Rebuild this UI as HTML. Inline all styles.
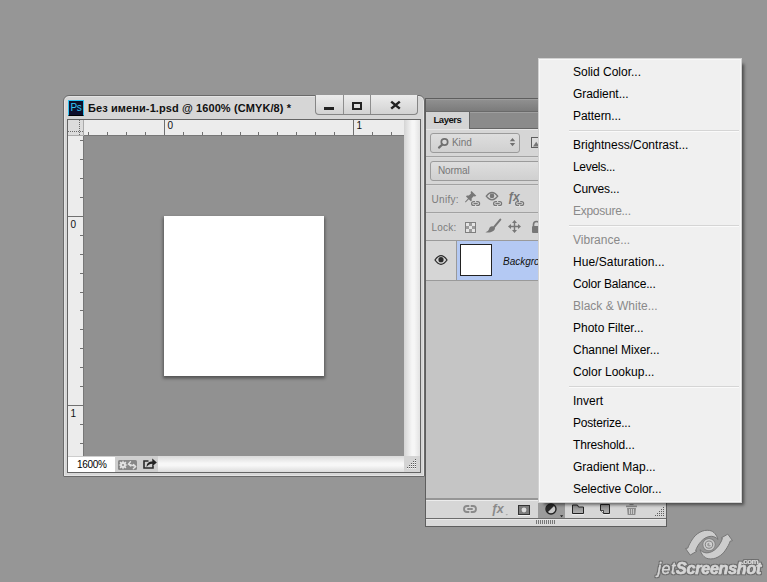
<!DOCTYPE html>
<html lang="ru">
<head>
<meta charset="utf-8">
<title>Photoshop - Layers adjustment menu</title>
<style>
*{box-sizing:border-box;margin:0;padding:0}
html,body{width:767px;height:582px;overflow:hidden}
body{background:#969696;font-family:"Liberation Sans",sans-serif;position:relative;color:#000}
.abs{position:absolute}
/* ---------- document window ---------- */
#win{position:absolute;left:63px;top:95px;width:362px;height:382px;background:#d6d6d6;border:1px solid #6a6a6a;border-radius:6px 6px 1px 1px;box-shadow:inset 0 0 0 1px #e4e4e4}
#title{position:absolute;left:24px;top:4px;font-size:11px;line-height:16px;white-space:nowrap;color:#111;font-weight:bold;letter-spacing:0.1px}
#psico{position:absolute;left:4px;top:4px;width:16px;height:16px;background:#0d0f2b;border:1px solid #2fc3f2;border-bottom:1px solid #000;color:#35c6f4;font-size:10px;line-height:14px;text-align:center;font-weight:normal;letter-spacing:-0.4px}
#btns{position:absolute;left:251px;top:-1px;width:103px;height:20px;border:1px solid #858585;border-top:none;border-radius:0 0 4px 4px;background:linear-gradient(#ececec,#d2d2d2)}
#btns i{position:absolute;top:0;width:1px;height:19px;background:#8e8e8e}
#inner{position:absolute;left:3px;top:23px;width:354px;height:354px;border:1px solid #646464;background:#919191;overflow:hidden}
#hr{position:absolute;left:16px;top:0;width:320px;height:16px;background:#ececec;border-bottom:1px solid #777}
#vr{position:absolute;left:0;top:16px;width:16px;height:320px;background:#ececec;border-right:1px solid #777}
#corner{position:absolute;left:0;top:0;width:16px;height:16px;background:#dcdcdc;border-right:1px solid #aaa;border-bottom:1px solid #aaa}
.rl{position:absolute;font-size:10px;line-height:9px;color:#111}
#doc{position:absolute;left:96px;top:96px;width:160px;height:160px;background:#fff;box-shadow:0 1.500px 3px 1px rgba(0,0,0,.42)}
#vsb{position:absolute;left:336px;top:0;width:16px;height:336px;background:linear-gradient(90deg,#d4d4d4,#f6f6f6 50%,#f6f6f6 65%,#e2e2e2)}
#status{position:absolute;left:0;top:336px;width:352px;height:16px;background:#cfcfcf}
#zoom{position:absolute;left:0;top:0;width:47px;height:16px;background:#fff;font-size:10px;line-height:15px;padding-left:9px;color:#000;letter-spacing:-0.3px;border-top:1px solid #cdcdcd}
#hsb{position:absolute;left:90px;top:0;width:246px;height:16px;background:linear-gradient(#dadada,#f7f7f7 45%,#f7f7f7 60%,#dcdcdc)}
#grip{position:absolute;left:336px;top:0;width:16px;height:16px;background:#d4d4d4}
/* ---------- layers panel ---------- */
#panel{position:absolute;left:425px;top:98px;width:242px;height:429px;border:1px solid #5e5e5e;background:#d6d6d6;overflow:hidden}
#pempty{position:absolute;left:0;top:182px;width:240px;height:217px;background:#c5c5c5}
#phead{position:absolute;left:0;top:0;width:240px;height:12px;background:linear-gradient(#919191,#7b7b7b);box-shadow:inset 0 1px 0 #9c9c9c}
#ptabs{position:absolute;left:0;top:13px;width:240px;height:17px;background:#8b8b8b;border-bottom:1px solid #666;box-shadow:inset 0 1px 0 #9f9f9f,0 1px 0 #e6e6e6}
#ptab{position:absolute;left:0;top:0;width:44px;height:17px;background:#d4d4d4;border-right:1px solid #666;font-size:9.5px;font-weight:bold;line-height:16px;padding-left:7.5px;color:#111;letter-spacing:-0.45px}
.sepd{position:absolute;left:0;width:240px;height:1px;background:#a2a2a2}
.sepl{position:absolute;left:0;width:240px;height:1px;background:#dadada}
.dd{position:absolute;height:20px;border:1px solid #9b9b9b;border-radius:3px;background:linear-gradient(#dedede,#d0d0d0);font-size:10px;line-height:18px;color:#777;letter-spacing:-0.3px}
.lbl{position:absolute;font-size:10px;line-height:12px;color:#7c7c7c}
#lrow{position:absolute;left:0;top:141px;width:240px;height:41px;border-top:1px solid #9a9a9a;border-bottom:1px solid #9a9a9a;background:#b4c9f3}
#leye{position:absolute;left:0;top:0;width:31px;height:39px;background:#d6d6d6;border-right:1px solid #9a9a9a}
#thumb{position:absolute;left:34px;top:3px;width:32px;height:32px;background:#fff;border:1px solid #222}
#lname{position:absolute;left:77px;top:14px;font-size:10px;font-style:italic;line-height:14px;color:#111;white-space:nowrap}
#pfoot{position:absolute;left:0;top:399px;width:240px;height:21px;background:#d6d6d6;border-top:2px solid #969696;border-bottom:1px solid #6c6c6c;box-shadow:inset 0 1px 0 #ececec}
#pgrip{position:absolute;left:0;top:420px;width:240px;height:7px;background:#d9d9d9;box-shadow:inset 0 1px 0 #e8e8e8}
/* ---------- menu ---------- */
#menu{position:absolute;left:538px;top:58px;width:204px;height:445px;background:#f0f0f0;border:1px solid #d2d2d2;box-shadow:4px 4px 3px -2px rgba(0,0,0,.5),inset 0 0 0 1px #f8f8f8;padding:2px}
#menu div.mi{height:22px;line-height:23px;font-size:12px;padding-left:32px;white-space:nowrap;color:#000}
#menu div.dis{color:#8a8a8a}
#menu div.ms{height:7px;position:relative}
#menu div.ms:after{content:"";position:absolute;left:28px;right:0px;top:3px;height:1px;background:#d5d5d5;border-bottom:1px solid #fafafa;box-sizing:content-box}
/* ---------- watermark ---------- */
#wm{position:absolute;left:650px;top:526px;width:117px;height:56px}
</style>
</head>
<body>

<div id="win">
  <div id="psico">Ps</div>
  <div id="title">Без имени-1.psd @ 1600% (CMYK/8) *</div>
  <div id="btns"><i style="left:27px"></i><i style="left:54px"></i>
    <svg class="abs" style="left:0;top:0" width="103" height="20" viewBox="0 0 103 20">
      <rect x="8" y="12" width="10" height="3" fill="#222"/>
      <rect x="37" y="8" width="8" height="6" fill="none" stroke="#222" stroke-width="2"/>
      <path d="M75.200 6.600L83.800 13.600M83.800 6.600L75.200 13.600" stroke="#222" stroke-width="2.500" fill="none"/>
    </svg>
  </div>
  <div id="inner">
    <div id="doc"></div>
    <div id="hr"></div>
    <div id="vr"></div>
    <div id="corner"></div>
    <svg class="abs" style="left:0;top:0" width="336" height="336" viewBox="0 0 336 336" id="ticks"><path d="M20.5 12V15M39.5 12V15M58.5 12V15M77.5 12V15M96.5 0V15M115.5 12V15M134.5 12V15M153.5 12V15M172.5 12V15M190.5 12V15M209.5 12V15M228.5 12V15M247.5 12V15M266.5 12V15M285.5 0V15M304.5 12V15M323.5 12V15M12 20.5H15M12 39.5H15M12 58.5H15M12 77.5H15M0 96.5H15M12 115.5H15M12 134.5H15M12 153.5H15M12 172.5H15M12 190.5H15M12 209.5H15M12 228.5H15M12 247.5H15M12 266.5H15M0 285.5H15M12 304.5H15M12 323.5H15" stroke="#707070" stroke-width="1" fill="none" shape-rendering="crispEdges"/></svg>
    <span class="rl" style="left:99.5px;top:1px">0</span>
    <span class="rl" style="left:288.5px;top:1px">1</span>
    <span class="rl" style="left:2.5px;top:100px">0</span>
    <span class="rl" style="left:2.5px;top:289px">1</span>
    <div id="vsb"></div>
    <div id="status">
      <div id="zoom">1600%</div>
      <div id="hsb"></div>
      <div id="grip"></div>
    </div>
  </div>
</div>

<div id="panel">
  <div id="phead"></div>
  <div class="sepd" style="top:12px;background:#6a6a6a"></div>
  <div id="ptabs"><div id="ptab">Layers</div></div>
  <div class="dd" style="left:4px;top:34px;width:90px;padding-left:21px;letter-spacing:-0.1px">Kind</div>
  <div class="sepd" style="top:57px"></div><div class="sepl" style="top:58px"></div>
  <div class="dd" style="left:4px;top:62px;width:230px;padding-left:7px;letter-spacing:-0.1px">Normal</div>
  <div class="sepd" style="top:85px"></div><div class="sepl" style="top:86px"></div>
  <div class="lbl" style="left:5.5px;top:95px;letter-spacing:0.3px">Unify:</div>
  <div class="sepd" style="top:113px"></div><div class="sepl" style="top:114px"></div>
  <div class="lbl" style="left:5.5px;top:123px;letter-spacing:0.2px">Lock:</div>
  <div id="lrow"><div id="leye"></div><div id="thumb"></div><div id="lname">Background</div></div>
  <div id="pempty"></div>
  <div id="pfoot"></div>
  <div id="pgrip"></div>
</div>

<svg class="abs" style="left:0;top:0" width="767" height="582" viewBox="0 0 767 582" id="ov1"><rect x="79" y="120" width="1" height="1" fill="#6a6a6a"/><rect x="79" y="122" width="1" height="1" fill="#6a6a6a"/><rect x="79" y="124" width="1" height="1" fill="#6a6a6a"/><rect x="79" y="126" width="1" height="1" fill="#6a6a6a"/><rect x="79" y="128" width="1" height="1" fill="#6a6a6a"/><rect x="79" y="134" width="1" height="1" fill="#6a6a6a"/><rect x="68" y="131" width="1" height="1" fill="#6a6a6a"/><rect x="70" y="131" width="1" height="1" fill="#6a6a6a"/><rect x="72" y="131" width="1" height="1" fill="#6a6a6a"/><rect x="74" y="131" width="1" height="1" fill="#6a6a6a"/><rect x="76" y="131" width="1" height="1" fill="#6a6a6a"/><rect x="82" y="131" width="1" height="1" fill="#6a6a6a"/><rect x="79" y="130" width="1" height="1" fill="#6a6a6a"/><rect x="78" y="131" width="1" height="1" fill="#6a6a6a"/><rect x="80" y="131" width="1" height="1" fill="#6a6a6a"/><rect x="79" y="132" width="1" height="1" fill="#6a6a6a"/>
<rect x="415" y="459" width="1" height="1" fill="#5a5a5a"/><rect x="413" y="461" width="1" height="1" fill="#5a5a5a"/><rect x="415" y="461" width="1" height="1" fill="#5a5a5a"/><rect x="411" y="463" width="1" height="1" fill="#5a5a5a"/><rect x="413" y="463" width="1" height="1" fill="#5a5a5a"/><rect x="415" y="463" width="1" height="1" fill="#5a5a5a"/><rect x="409" y="465" width="1" height="1" fill="#5a5a5a"/><rect x="411" y="465" width="1" height="1" fill="#5a5a5a"/><rect x="413" y="465" width="1" height="1" fill="#5a5a5a"/><rect x="415" y="465" width="1" height="1" fill="#5a5a5a"/><rect x="407" y="467" width="1" height="1" fill="#5a5a5a"/><rect x="409" y="467" width="1" height="1" fill="#5a5a5a"/><rect x="411" y="467" width="1" height="1" fill="#5a5a5a"/><rect x="413" y="467" width="1" height="1" fill="#5a5a5a"/><rect x="415" y="467" width="1" height="1" fill="#5a5a5a"/>
<rect x="415" y="460" width="1" height="1" fill="#f4f4f4"/><rect x="413" y="462" width="1" height="1" fill="#f4f4f4"/><rect x="415" y="462" width="1" height="1" fill="#f4f4f4"/><rect x="411" y="464" width="1" height="1" fill="#f4f4f4"/><rect x="413" y="464" width="1" height="1" fill="#f4f4f4"/><rect x="415" y="464" width="1" height="1" fill="#f4f4f4"/><rect x="409" y="466" width="1" height="1" fill="#f4f4f4"/><rect x="411" y="466" width="1" height="1" fill="#f4f4f4"/><rect x="413" y="466" width="1" height="1" fill="#f4f4f4"/><rect x="415" y="466" width="1" height="1" fill="#f4f4f4"/><rect x="407" y="468" width="1" height="1" fill="#f4f4f4"/><rect x="409" y="468" width="1" height="1" fill="#f4f4f4"/><rect x="411" y="468" width="1" height="1" fill="#f4f4f4"/><rect x="413" y="468" width="1" height="1" fill="#f4f4f4"/><rect x="415" y="468" width="1" height="1" fill="#f4f4f4"/>
<rect x="663" y="507" width="1" height="1" fill="#5e5e5e"/><rect x="661" y="509" width="1" height="1" fill="#5e5e5e"/><rect x="663" y="509" width="1" height="1" fill="#5e5e5e"/><rect x="659" y="511" width="1" height="1" fill="#5e5e5e"/><rect x="661" y="511" width="1" height="1" fill="#5e5e5e"/><rect x="663" y="511" width="1" height="1" fill="#5e5e5e"/><rect x="657" y="513" width="1" height="1" fill="#5e5e5e"/><rect x="659" y="513" width="1" height="1" fill="#5e5e5e"/><rect x="661" y="513" width="1" height="1" fill="#5e5e5e"/><rect x="663" y="513" width="1" height="1" fill="#5e5e5e"/><rect x="655" y="515" width="1" height="1" fill="#5e5e5e"/><rect x="657" y="515" width="1" height="1" fill="#5e5e5e"/><rect x="659" y="515" width="1" height="1" fill="#5e5e5e"/><rect x="661" y="515" width="1" height="1" fill="#5e5e5e"/><rect x="663" y="515" width="1" height="1" fill="#5e5e5e"/>
<rect x="536" y="520" width="1" height="4" fill="#777"/><rect x="538" y="520" width="1" height="4" fill="#777"/><rect x="540" y="520" width="1" height="4" fill="#777"/><rect x="542" y="520" width="1" height="4" fill="#777"/><rect x="544" y="520" width="1" height="4" fill="#777"/><rect x="546" y="520" width="1" height="4" fill="#777"/><rect x="548" y="520" width="1" height="4" fill="#777"/><rect x="550" y="520" width="1" height="4" fill="#777"/><rect x="552" y="520" width="1" height="4" fill="#777"/><rect x="554" y="520" width="1" height="4" fill="#777"/>

<rect x="118" y="460" width="19" height="10" rx="1.500" fill="#878787"/>
<g fill="none" stroke="#e2e2e2">
<circle cx="123" cy="465" r="2.100" stroke-width="1.800"/>
<path d="M123 460.800V469.200M118.800 465H127.200M120 462L126 468M126 462L120 468" stroke-width="1.200"/>
<path d="M128.600 464.200L135.400 466.300M130.500 461.700L128.300 464.100L130.800 466M133.500 464.500L135.800 466.400L133.300 468.700" stroke-width="1.300" stroke-linejoin="round" stroke-linecap="round"/>
</g>
<circle cx="123" cy="465" r="1" fill="#878787"/>
<path d="M148.500 461H144V468H153V465.500" fill="none" stroke="#2a2a2a" stroke-width="1.600"/>
<path d="M146.600 467C146.600 463 149 461.400 152.300 461.400V458.600L156.800 462.400L152.300 466.200V463.800C150 463.800 148.300 464.600 146.600 467Z" fill="#222"/>

<circle cx="444.500" cy="142" r="3.200" fill="none" stroke="#707070" stroke-width="1.700"/><path d="M442.300 144.500L439 147.600" stroke="#707070" stroke-width="2.200" stroke-linecap="round"/>
<path d="M509.800 141.200H515.200L512.500 138ZM509.800 143H515.200L512.500 146.200Z" fill="#707070"/>
<rect x="531.500" y="137.500" width="13" height="10" fill="#dcdcdc" stroke="#5e5e5e"/><path d="M533 146.500L536.200 141.800L539.500 146.500Z" fill="#777777"/>
<path d="M471.500 191L476.300 195.800L475 196.600L473.600 196.200L471.600 198.600L471.800 200.600L470.800 201.200L468.800 199.200L465.600 202.400L465 201.800L468 198.400L466 196.400L466.800 195.400L468.800 195.600L471 193.400L470.600 192Z" fill="#777777"/>
<rect x="471.6" y="201.6" width="8" height="4" rx="2" fill="none" stroke="#777777" stroke-width="1.200"/><rect x="475.0" y="200.8" width="1.200" height="1.600" fill="#d6d6d6"/><rect x="475.0" y="204.8" width="1.200" height="1.600" fill="#d6d6d6"/><rect x="473.5" y="203" width="4.200" height="1.300" fill="#777777"/><rect x="472" y="206.2" width="7.500" height="0.800" fill="#e6e6e6"/>
<path d="M486.25 196.2Q492 188.79999999999998 497.75 196.2Q492 203.6 486.25 196.2Z" fill="none" stroke="#777777" stroke-width="1.300"/><circle cx="492" cy="195.89999999999998" r="2.3" fill="#777777"/>
<rect x="493.6" y="201.6" width="8" height="4" rx="2" fill="none" stroke="#777777" stroke-width="1.200"/><rect x="497.0" y="200.8" width="1.200" height="1.600" fill="#d6d6d6"/><rect x="497.0" y="204.8" width="1.200" height="1.600" fill="#d6d6d6"/><rect x="495.5" y="203" width="4.200" height="1.300" fill="#777777"/><rect x="494" y="206.2" width="7.500" height="0.800" fill="#e6e6e6"/>
<text x="507.500" y="200.600" font-family="Liberation Sans,sans-serif" font-style="italic" font-weight="bold" font-size="12" fill="#777777" letter-spacing="-1.200">ƒx</text>
<rect x="515.6" y="201.6" width="8" height="4" rx="2" fill="none" stroke="#777777" stroke-width="1.200"/><rect x="519.0" y="200.8" width="1.200" height="1.600" fill="#d6d6d6"/><rect x="519.0" y="204.8" width="1.200" height="1.600" fill="#d6d6d6"/><rect x="517.5" y="203" width="4.200" height="1.300" fill="#777777"/><rect x="516" y="206.2" width="7.500" height="0.800" fill="#e6e6e6"/>
<rect x="465.500" y="222.500" width="10" height="10" fill="#e4e4e4" stroke="#7e7e7e"/><rect x="466" y="226" width="3" height="3" fill="#9c9c9c"/><rect x="469" y="223" width="3" height="3" fill="#9c9c9c"/><rect x="469" y="229" width="3" height="3" fill="#9c9c9c"/><rect x="472" y="226" width="3" height="3" fill="#9c9c9c"/>
<path d="M500.300 219.600L493.600 227.600" stroke="#777777" stroke-width="2" stroke-linecap="round"/><path d="M493 226.400L495 228.200C494.600 231.500 490.500 233 485.400 232.200C488 231.200 488.600 230 489.200 228.400C490 226.400 491.600 225.800 493 226.400Z" fill="#777777"/>
<path d="M514.500 220L517 223H515.200V225.800H518V224L521 226.500L518 229V227.200H515.200V230H517L514.500 233L512 230H513.800V227.200H511V229L508 226.500L511 224V225.800H513.800V223H512Z" fill="#777777"/>
<path d="M533.500 226V224.500A3 3 0 0 1 539.500 224.500V226" fill="none" stroke="#777777" stroke-width="1.600"/><rect x="532" y="226" width="9" height="7" rx="1" fill="#777777"/>
<path d="M435.0 260Q441 251.4 447.0 260Q441 268.6 435.0 260Z" fill="none" stroke="#2c2c2c" stroke-width="1.300"/><circle cx="441" cy="259.7" r="2.6" fill="#2c2c2c"/>
<rect x="464" y="506" width="12" height="6" rx="3" fill="none" stroke="#8a8a8a" stroke-width="1.800"/><rect x="467.500" y="508.100" width="5" height="1.800" fill="#8a8a8a"/><rect x="469.300" y="505" width="1.400" height="8" fill="#d6d6d6"/>
<rect x="467.500" y="508.100" width="5" height="1.800" fill="#8a8a8a"/>
<text x="491" y="512.600" font-family="Liberation Sans,sans-serif" font-style="italic" font-weight="bold" font-size="12.500" fill="#8a8a8a" letter-spacing="-1.200">ƒx</text><path d="M505.500 514L508 514L506.750 515.500Z" fill="#aaa"/>
<rect x="518.500" y="505.500" width="11" height="9" fill="#7c7c7c" stroke="#333"/><circle cx="524" cy="510" r="2.400" fill="#dcdcdc"/><rect x="518" y="515" width="12" height="1" fill="#f2f2f2"/>
<rect x="538" y="499" width="27" height="19" fill="#9b9b9b"/>
<circle cx="551" cy="509" r="5" fill="#c9c9c9" stroke="#222" stroke-width="1.400"/><path d="M547.460 512.540A5 5 0 0 1 554.540 505.460Z" fill="#2a2a2a"/><path d="M560 515.300H563.200L561.600 517.200Z" fill="#222"/>
<defs><linearGradient id="fg" x1="0" y1="0" x2="0" y2="1"><stop offset="0" stop-color="#868686"/><stop offset="1" stop-color="#b0b0b0"/></linearGradient></defs>
<path d="M572.500 505H577.500L578.500 507H583.500V513.500H572.500Z" fill="url(#fg)" stroke="#222"/><rect x="572" y="514.200" width="12" height="1" fill="#f0f0f0"/>
<path d="M600.500 504.500H609.500V513.500H603.500L600.500 510.500Z" fill="url(#fg)" stroke="#222"/><path d="M600.500 510.500H603.500V513.500" fill="#e8e8e8" stroke="#222" stroke-width="0.800"/><rect x="603" y="514.200" width="7" height="1" fill="#f0f0f0"/>
<g fill="#8c8c8c"><rect x="629.500" y="504" width="4" height="1.200"/><rect x="626" y="505.600" width="11" height="1.600"/><path d="M627 508H636L635.300 515H627.700Z"/></g><path d="M629.500 509V514M631.500 509V514M633.500 509V514" stroke="#d0d0d0" stroke-width="0.900"/></svg>

<div id="menu">
  <div class="mi">Solid Color...</div>
  <div class="mi" style="letter-spacing:-0.05px">Gradient...</div>
  <div class="mi" style="letter-spacing:-0.07px">Pattern...</div>
  <div class="ms"></div>
  <div class="mi">Brightness/Contrast...</div>
  <div class="mi" style="letter-spacing:-0.3px">Levels...</div>
  <div class="mi" style="letter-spacing:-0.18px">Curves...</div>
  <div class="mi dis" style="letter-spacing:-0.27px">Exposure...</div>
  <div class="ms"></div>
  <div class="mi dis">Vibrance...</div>
  <div class="mi" style="letter-spacing:0.1px">Hue/Saturation...</div>
  <div class="mi" style="letter-spacing:-0.17px">Color Balance...</div>
  <div class="mi dis">Black &amp; White...</div>
  <div class="mi">Photo Filter...</div>
  <div class="mi">Channel Mixer...</div>
  <div class="mi">Color Lookup...</div>
  <div class="ms"></div>
  <div class="mi">Invert</div>
  <div class="mi" style="letter-spacing:-0.2px">Posterize...</div>
  <div class="mi" style="letter-spacing:-0.14px">Threshold...</div>
  <div class="mi">Gradient Map...</div>
  <div class="mi" style="letter-spacing:-0.08px">Selective Color...</div>
</div>

<svg class="abs" style="left:0;top:0" width="767" height="582" viewBox="0 0 767 582" id="wmsvg">
<g transform="translate(709 544.600)" fill="#cdcdcd" stroke="#767676" stroke-width="1" stroke-linejoin="round">
<path d="M8.950 -5.100C8 -9 5 -13.500 0.700 -14.100C-6 -15.500 -13 -11 -16.500 -5.500C-18.500 -2.500 -20.500 1 -21.200 3.500L-23.500 3.900L-18.800 10.500L-12.200 6.600L-13.400 6.200C-12.500 3 -10 -1 -7.900 -3.200C-5 -6.500 -1 -8.300 2.300 -8.300C5 -8.300 7.500 -6.800 8.950 -5.100Z"/>
<path d="M8.950 -5.100C8 -9 5 -13.500 0.700 -14.100C-6 -15.500 -13 -11 -16.500 -5.500C-18.500 -2.500 -20.500 1 -21.200 3.500L-23.500 3.900L-18.800 10.500L-12.200 6.600L-13.400 6.200C-12.500 3 -10 -1 -7.900 -3.200C-5 -6.500 -1 -8.300 2.300 -8.300C5 -8.300 7.500 -6.800 8.950 -5.100Z" transform="rotate(180)"/>
<circle r="6.700" fill="#838383" stroke="none"/>
<circle r="5.700" fill="#c9c9c9" stroke="none"/>
<circle r="4.200" fill="#838383" stroke="none"/>
<circle r="3.200" fill="#d0d0d0" stroke="none"/>
<path d="M0.300 -1.900A1.900 1.900 0 1 0 1.900 0.300H0.300Z" fill="#9a9a9a" stroke="none"/>
</g>
<defs><filter id="ol" x="-5%" y="-20%" width="110%" height="140%"><feMorphology in="SourceAlpha" operator="dilate" radius="0.900" result="d"/><feFlood flood-color="#6b6b6b"/><feComposite in2="d" operator="in" result="o"/><feMerge><feMergeNode in="o"/><feMergeNode in="SourceGraphic"/></feMerge></filter></defs>
<g font-family="Liberation Sans,sans-serif" font-style="italic" fill="#d6d6d6" stroke="#d6d6d6" stroke-linejoin="round" filter="url(#ol)">
<text x="657.500" y="573.600" font-size="16" letter-spacing="0.500" stroke-width="0.300">jet</text>
<text x="676" y="573.600" font-size="16" font-weight="bold" letter-spacing="-0.200" stroke-width="0.600">Screenshot</text>
<text x="741.500" y="564.300" font-size="8" font-weight="bold" font-style="normal" stroke-width="0.200" letter-spacing="-0.500">.com</text>
</g>
</svg>

</body>
</html>
